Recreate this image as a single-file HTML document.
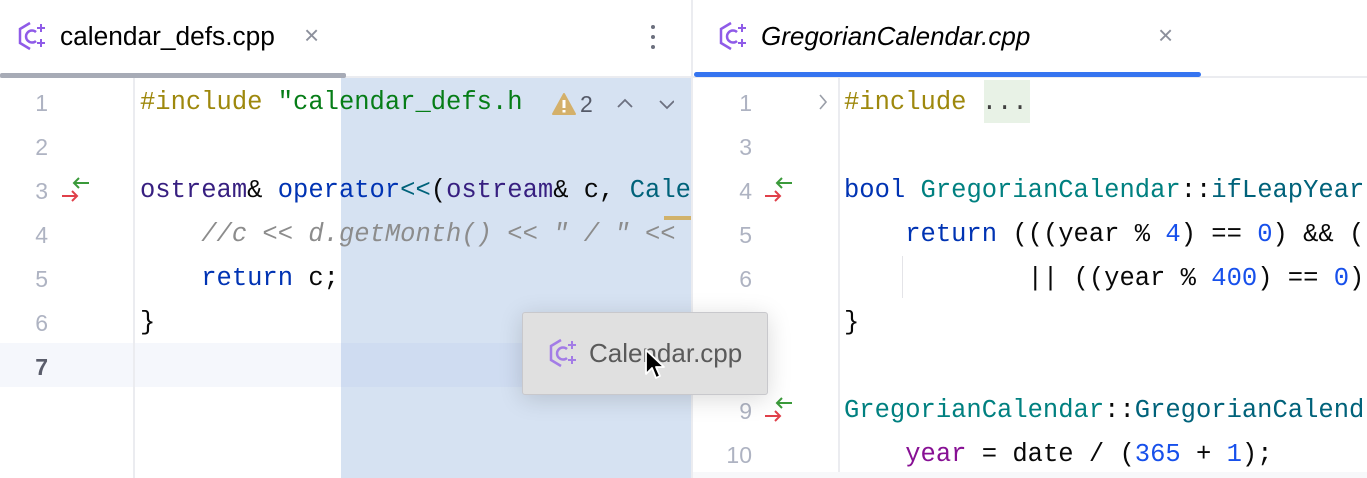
<!DOCTYPE html>
<html><head><meta charset="utf-8"><style>
*{margin:0;padding:0;box-sizing:border-box}
body{width:1367px;height:478px;overflow:hidden;background:#fff;position:relative;font-family:"Liberation Sans",sans-serif}
.a{position:absolute}
.code{position:absolute;font-family:"Liberation Mono",monospace;font-size:25.5px;white-space:pre;line-height:44px;height:44px;color:#080808;top:0}
.ln{position:absolute;font-family:"Liberation Sans",sans-serif;font-size:23px;color:#aeb3c2;line-height:44px;text-align:right;width:40px}
.kw{color:#0033b3}.inc{color:#9e880d}.str{color:#067d17}.ty{color:#371f80}.cl{color:#00627a}.cm{color:#8c8c8c;font-style:italic}.num{color:#1750eb}.fld{color:#871094}
</style></head><body>
<div class="a" style="left:0;top:76px;width:1367px;height:2px;background:#ebecf0"></div>
<div class="a" style="left:0;top:73px;width:346px;height:5px;background:#a7abb6;border-radius:2px"></div>
<div class="a" style="left:694px;top:72px;width:507px;height:5px;background:#3574f0;border-radius:3px"></div>
<div class="a" style="left:691px;top:0;width:2px;height:478px;background:#ebecf0"></div>

<svg class="a" style="left:16px;top:20px" width="34" height="34" viewBox="0 0 34 34"><path d="M14 3 L4 9 V23 L14 29" fill="none" stroke="#8f5be8" stroke-width="2.5"/><path d="M20 12 A6 6 0 1 0 20 21" fill="none" stroke="#8f5be8" stroke-width="2.5"/><path d="M25 4v8M21 8h8M25 19v8M21 23h8" stroke="#8f5be8" stroke-width="2"/></svg>
<div class="a" style="left:60px;top:21px;font-size:26.3px;color:#000">calendar_defs.cpp</div>
<div class="a" style="left:304px;top:20px;font-size:26px;color:#8c909c">×</div>
<div class="a" style="left:651px;top:25px;width:4px;height:4px;border-radius:2px;background:#6c707e;box-shadow:0 10px #6c707e,0 20px #6c707e"></div>

<svg class="a" style="left:717px;top:20px" width="34" height="34" viewBox="0 0 34 34"><path d="M14 3 L4 9 V23 L14 29" fill="none" stroke="#8f5be8" stroke-width="2.5"/><path d="M20 12 A6 6 0 1 0 20 21" fill="none" stroke="#8f5be8" stroke-width="2.5"/><path d="M25 4v8M21 8h8M25 19v8M21 23h8" stroke="#8f5be8" stroke-width="2"/></svg>
<div class="a" style="left:761px;top:21px;font-size:26px;color:#000;font-style:italic">GregorianCalendar.cpp</div>
<div class="a" style="left:1158px;top:20px;font-size:26px;color:#8c909c">×</div>

<div class="a" style="left:0;top:343px;width:691px;height:44px;background:#f5f7fc"></div>
<div class="a" style="left:341px;top:78px;width:350px;height:400px;background:#d6e2f2"></div>
<div class="a" style="left:341px;top:343px;width:350px;height:44px;background:#cfdcf1"></div>
<div class="a" style="left:133px;top:78px;width:2px;height:400px;background:#ebecf0"></div>
<div class="a" style="left:664px;top:216px;width:27px;height:4px;background:#d1b26b"></div>

<div class="ln" style="left:8px;top:81px">1</div>
<div class="ln" style="left:8px;top:125px">2</div>
<div class="ln" style="left:8px;top:169px">3</div>
<div class="ln" style="left:8px;top:213px">4</div>
<div class="ln" style="left:8px;top:257px">5</div>
<div class="ln" style="left:8px;top:301px">6</div>
<div class="ln" style="left:8px;top:345px;color:#5a5d6b;font-weight:bold">7</div>
<svg class="a" style="left:60px;top:174px" width="32" height="32"><path d="M14 9h15M19 4l-5 5 5 5" fill="none" stroke="#3a9a3a" stroke-width="2"/><path d="M2 22h15M12 17l5 5-5 5" fill="none" stroke="#e0404a" stroke-width="2"/></svg>

<div class="code" style="left:140px;top:81px"><span class="inc">#include</span> <span class="str">"calendar_defs.h</span></div>
<div class="a" style="left:536px;top:82px;width:153px;height:40px;background:#d6e2f2"></div>
<svg class="a" style="left:551px;top:92px" width="26" height="24"><path d="M13 2 L24 22 H2 Z" fill="#d4b06a" stroke="#d4b06a" stroke-width="2" stroke-linejoin="round"/><rect x="11.5" y="8" width="3" height="8" fill="#fff"/><rect x="11.5" y="18" width="3" height="2.5" fill="#fff"/></svg>
<div class="a" style="left:580px;top:91px;font-size:23px;color:#555a68">2</div>
<svg class="a" style="left:614px;top:96px" width="60" height="16"><path d="M4 11l7-7 7 7M46 5l7 7 7-7" fill="none" stroke="#6c7080" stroke-width="1.8"/></svg>

<div class="code" style="left:140px;top:169px"><span class="ty">ostream</span>&amp; <span class="kw">operator</span><span class="cl">&lt;&lt;</span>(<span class="ty">ostream</span>&amp; c, <span class="cl">Cale</span></div>
<div class="code" style="left:140px;top:213px">    <span class="cm">//c &lt;&lt; d.getMonth() &lt;&lt; " / " &lt;&lt;</span></div>
<div class="code" style="left:140px;top:257px">    <span class="kw">return</span> c;</div>
<div class="code" style="left:140px;top:301px">}</div>

<div class="a" style="left:838px;top:78px;width:2px;height:400px;background:#ebecf0"></div>
<div class="a" style="left:902px;top:256px;width:1px;height:42px;background:#e4e4e8"></div>
<div class="ln" style="left:712px;top:81px">1</div>
<div class="ln" style="left:712px;top:125px">3</div>
<div class="ln" style="left:712px;top:169px">4</div>
<div class="ln" style="left:712px;top:213px">5</div>
<div class="ln" style="left:712px;top:257px">6</div>
<div class="ln" style="left:712px;top:301px">7</div>
<div class="ln" style="left:712px;top:345px">8</div>
<div class="ln" style="left:712px;top:389px">9</div>
<div class="ln" style="left:712px;top:433px">10</div>
<svg class="a" style="left:817px;top:93px" width="12" height="18"><path d="M3 2l6 7-6 7" fill="none" stroke="#9a9ea8" stroke-width="1.6"/></svg>
<svg class="a" style="left:763px;top:174px" width="32" height="32"><path d="M14 9h15M19 4l-5 5 5 5" fill="none" stroke="#3a9a3a" stroke-width="2"/><path d="M2 22h15M12 17l5 5-5 5" fill="none" stroke="#e0404a" stroke-width="2"/></svg>
<svg class="a" style="left:763px;top:394px" width="32" height="32"><path d="M14 9h15M19 4l-5 5 5 5" fill="none" stroke="#3a9a3a" stroke-width="2"/><path d="M2 22h15M12 17l5 5-5 5" fill="none" stroke="#e0404a" stroke-width="2"/></svg>
<div class="a" style="left:984px;top:80px;width:46px;height:43px;background:#e8f2e6"></div>

<div class="code" style="left:844px;top:81px"><span class="inc">#include</span> <span style="color:#404040">...</span></div>
<div class="code" style="left:844px;top:169px"><span class="kw">bool</span> <span style="color:#008080">GregorianCalendar</span>::<span class="cl">ifLeapYear</span></div>
<div class="code" style="left:844px;top:213px">    <span class="kw">return</span> (((year % <span class="num">4</span>) == <span class="num">0</span>) &amp;&amp; (</div>
<div class="code" style="left:844px;top:257px">            || ((year % <span class="num">400</span>) == <span class="num">0</span>);</div>
<div class="code" style="left:844px;top:301px">}</div>
<div class="code" style="left:844px;top:389px"><span style="color:#008080">GregorianCalendar</span>::<span class="cl">GregorianCalend</span></div>
<div class="code" style="left:844px;top:433px">    <span class="fld">year</span> = date / (<span class="num">365</span> + <span class="num">1</span>);</div>
<div class="a" style="left:693px;top:472px;width:674px;height:6px;background:#f7f8fa"></div>

<div class="a" style="left:522px;top:312px;width:246px;height:83px;background:#e0e0e0;border:1px solid #c8c8cc;border-radius:3px;box-shadow:0 4px 24px rgba(0,0,0,0.15)"></div>
<svg class="a" style="left:547px;top:337px;opacity:.75" width="34" height="34" viewBox="0 0 34 34"><path d="M14 3 L4 9 V23 L14 29" fill="none" stroke="#8f5be8" stroke-width="2.5"/><path d="M20 12 A6 6 0 1 0 20 21" fill="none" stroke="#8f5be8" stroke-width="2.5"/><path d="M25 4v8M21 8h8M25 19v8M21 23h8" stroke="#8f5be8" stroke-width="2"/></svg>
<div class="a" style="left:589px;top:338px;font-size:26px;color:#5a5a5a">Calendar.cpp</div>
<svg class="a" style="left:644px;top:348px" width="26" height="36"><path d="M2 2 V26 L8 20 L12 30 L16 28 L12 19 H20 Z" fill="#000" stroke="#fff" stroke-width="1.8" stroke-linejoin="round"/></svg>
</body></html>
